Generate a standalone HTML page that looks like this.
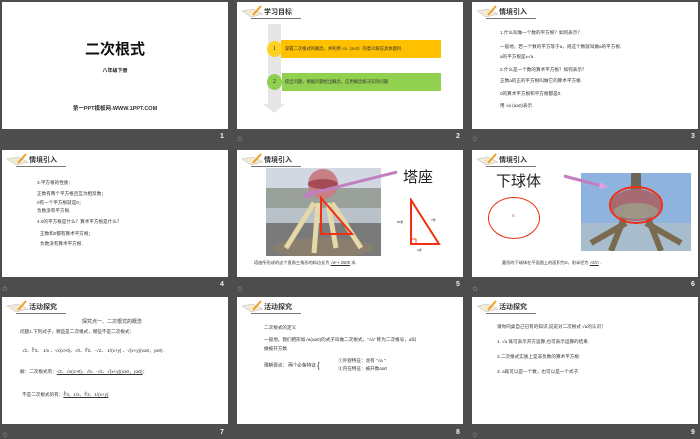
<!DOCTYPE html>
<html><head><meta charset="utf-8"><style>
*{margin:0;padding:0;box-sizing:border-box}
body{width:700px;height:437px;background:#4d4d4d;position:relative;overflow:hidden;font-family:"Liberation Sans","Noto Sans CJK SC",sans-serif;color:#222}
.s{position:absolute;width:226px;height:127px;background:#fff;overflow:hidden}
.a{position:absolute;white-space:nowrap}
.t{font-size:4.6px;color:#333}
.num{position:absolute;color:#eee;font-size:7px;font-weight:bold}
.star{position:absolute;color:#aaa;font-size:6px}
.hd{position:absolute;left:4px;top:3px;width:62px;height:14px}
.hd .lbl{position:absolute;left:23px;top:2px;font-size:7px;font-weight:bold;color:#333}
.hd .ul{position:absolute;left:10px;top:13px;width:50px;height:1px;background:#777}
</style></head><body>

<!-- header template via svg icon -->
<!-- Slide 1 -->
<div class="s" style="left:2px;top:2px">
<div class="a" style="left:0;width:226px;text-align:center;top:36px;font-size:15px;font-weight:bold;color:#111">二次根式</div>
<div class="a" style="left:0;width:226px;text-align:center;top:65px;font-size:5px;font-weight:bold">八年级下册</div>
<div class="a" style="left:0;width:226px;text-align:center;top:102px;font-size:5.5px;font-weight:bold;color:#333">第一PPT模板网-WWW.1PPT.COM</div>
</div>
<div class="num" style="left:220px;top:133px">1</div>

<!-- Slide 2 -->
<div class="s" style="left:237px;top:2px">
<div class="hd"><svg width="24" height="13" style="position:absolute;left:0;top:0"><path d="M1 6 L10 12 L22 9 L12 4Z" fill="#f3ead6" stroke="#bbb" stroke-width=".5"/><path d="M12 10 L20 1" stroke="#f0a020" stroke-width="2"/></svg><div class="lbl">学习目标</div><div class="ul"></div></div>
<div class="a" style="left:31px;top:22px;width:13px;height:82px;background:#e6e6e6"></div>
<div class="a" style="left:26px;top:102px;width:0;height:0;border-left:11px solid transparent;border-right:11px solid transparent;border-top:9px solid #e6e6e6"></div>
<div class="a" style="left:44px;top:38px;width:160px;height:18px;background:#ffc000"></div>
<div class="a" style="left:30px;top:39px;width:15px;height:16px;border-radius:50%;background:#ffd21f;font-size:6px;text-align:center;line-height:16px;font-family:'Liberation Serif',serif">1</div>
<div class="a t" style="left:48px;top:44px;font-size:4.3px">掌握二次根式的概念，并利用 √a（a≥0）的意义解答具体题目.</div>
<div class="a" style="left:45px;top:71px;width:159px;height:18px;background:#92d050"></div>
<div class="a" style="left:30px;top:72px;width:15px;height:16px;border-radius:50%;background:#8fd050;font-size:6px;text-align:center;line-height:16px;font-family:'Liberation Serif',serif">2</div>
<div class="a t" style="left:48px;top:77px;font-size:4.3px">提出问题，根据问题给出概念，应用概念解决实际问题.</div>
</div>
<div class="num" style="left:456px;top:133px">2</div>
<div class="star" style="left:237px;top:134px">☆</div>

<!-- Slide 3 -->
<div class="s" style="left:472px;top:2px">
<div class="hd"><svg width="24" height="13" style="position:absolute;left:0;top:0"><path d="M1 6 L10 12 L22 9 L12 4Z" fill="#f3ead6" stroke="#bbb" stroke-width=".5"/><path d="M12 10 L20 1" stroke="#f0a020" stroke-width="2"/></svg><div class="lbl">情境引入</div><div class="ul"></div></div>
<div class="a t" style="left:28px;top:28px">1.什么叫做一个数的平方根？如何表示？</div>
<div class="a t" style="left:28px;top:42px">一般地，若一个数的平方等于a，则这个数就叫做a的平方根.</div>
<div class="a t" style="left:28px;top:52px">a的平方根是±√a .</div>
<div class="a t" style="left:28px;top:65px">2.什么是一个数的算术平方根？如何表示？</div>
<div class="a t" style="left:28px;top:76px">正数a的正的平方根叫做它的算术平方根.</div>
<div class="a t" style="left:28px;top:89px">0的算术平方根和平方根都是0.</div>
<div class="a t" style="left:28px;top:101px">用 √a (a≥0)表示.</div>
</div>
<div class="num" style="left:691px;top:133px">3</div>
<div class="star" style="left:472px;top:134px">☆</div>

<!-- Slide 4 -->
<div class="s" style="left:2px;top:150px">
<div class="hd"><svg width="24" height="13" style="position:absolute;left:0;top:0"><path d="M1 6 L10 12 L22 9 L12 4Z" fill="#f3ead6" stroke="#bbb" stroke-width=".5"/><path d="M12 10 L20 1" stroke="#f0a020" stroke-width="2"/></svg><div class="lbl">情境引入</div><div class="ul"></div></div>
<div class="a t" style="left:35px;top:30px">3.平方根的性质：</div>
<div class="a t" style="left:35px;top:41px">正数有两个平方根且互为相反数；</div>
<div class="a t" style="left:35px;top:50px">0有一个平方根就是0；</div>
<div class="a t" style="left:35px;top:58px">负数没有平方根.</div>
<div class="a t" style="left:35px;top:69px">4.0的平方根是什么？算术平方根是什么？</div>
<div class="a t" style="left:38px;top:81px">正数和0都有算术平方根；</div>
<div class="a t" style="left:38px;top:91px">负数没有算术平方根.</div>
</div>
<div class="num" style="left:220px;top:281px">4</div>
<div class="star" style="left:2px;top:284px">☆</div>

<!-- Slide 5 -->
<div class="s" style="left:237px;top:150px">
<div class="hd"><svg width="24" height="13" style="position:absolute;left:0;top:0"><path d="M1 6 L10 12 L22 9 L12 4Z" fill="#f3ead6" stroke="#bbb" stroke-width=".5"/><path d="M12 10 L20 1" stroke="#f0a020" stroke-width="2"/></svg><div class="lbl">情境引入</div><div class="ul"></div></div>
<svg class="a" style="left:29px;top:18px" width="115" height="88">
<rect width="115" height="88" fill="#b9c1c9"/>
<rect y="0" width="115" height="20" fill="#d2d8e2"/>
<rect y="20" width="115" height="20" fill="#9aa09a"/>
<rect y="55" width="115" height="33" fill="#7a7a7a"/>
<ellipse cx="57" cy="80" rx="50" ry="10" fill="#8a7f6e"/>
<path d="M48 35 L20 80 M66 35 L95 80 M52 35 L48 85 M62 35 L70 80" stroke="#e6d8a8" stroke-width="5"/>
<circle cx="57" cy="16" r="15" fill="#c97f86"/>
<ellipse cx="57" cy="16" rx="15" ry="5" fill="#a54b55"/>
<path d="M55 30 L55 66 L86 66Z" fill="none" stroke="#f03010" stroke-width="2"/>
</svg>
<svg class="a" style="left:60px;top:16px" width="120" height="40"><path d="M8 30 L15 25 L12 31Z M12 28 L100 6" stroke="#c080c0" stroke-width="3" fill="#f0c0f0"/></svg>
<div class="a" style="left:166px;top:16px;font-size:15px;color:#222;font-family:'Noto Sans CJK SC',sans-serif">塔座</div>
<svg class="a" style="left:170px;top:48px" width="40" height="52"><path d="M4 2 L4 46 L32 46Z" fill="none" stroke="#f03010" stroke-width="2"/><rect x="4" y="41" width="5" height="5" fill="none" stroke="#f03010" stroke-width=".8"/></svg>
<div class="a" style="left:160px;top:70px;font-size:3px">50米</div>
<div class="a" style="left:194px;top:68px;font-size:3px">?米</div>
<div class="a" style="left:180px;top:98px;font-size:3px">a米</div>
<div class="a t" style="left:17px;top:110px;font-size:4.2px">塔座所形成的这个直角三角形的斜边长为 <u>√a²＋2500</u> 米.</div>
</div>
<div class="num" style="left:456px;top:281px">5</div>
<div class="star" style="left:237px;top:284px">☆</div>

<!-- Slide 6 -->
<div class="s" style="left:472px;top:150px">
<div class="hd"><svg width="24" height="13" style="position:absolute;left:0;top:0"><path d="M1 6 L10 12 L22 9 L12 4Z" fill="#f3ead6" stroke="#bbb" stroke-width=".5"/><path d="M12 10 L20 1" stroke="#f0a020" stroke-width="2"/></svg><div class="lbl">情境引入</div><div class="ul"></div></div>
<div class="a" style="left:24px;top:20px;font-size:15px;color:#222;font-family:'Noto Sans CJK SC',sans-serif">下球体</div>
<div class="a" style="left:16px;top:47px;width:52px;height:42px;border:1.5px solid #f03010;border-radius:50%"></div>
<div class="a" style="left:40px;top:63px;font-size:4px;color:#c03030">S</div>
<svg class="a" style="left:109px;top:23px" width="110" height="78">
<rect width="110" height="78" fill="#8fb3df"/>
<rect y="50" width="110" height="28" fill="#a7bccc"/>
<path d="M30 78 L45 40 M80 78 L65 40 M10 70 L45 50 M100 70 L65 50" stroke="#7a6a50" stroke-width="6"/>
<rect x="50" y="0" width="10" height="25" fill="#6c6658"/>
<ellipse cx="55" cy="32" rx="25" ry="16" fill="#a66a72"/>
<ellipse cx="55" cy="38" rx="22" ry="8" fill="#9d9585"/>
<ellipse cx="55" cy="32" rx="26" ry="18" fill="none" stroke="#f03010" stroke-width="2"/>
</svg>
<svg class="a" style="left:90px;top:22px" width="50" height="20"><path d="M2 4 L40 14" stroke="#c080c0" stroke-width="3"/><path d="M38 10 L46 15 L37 17Z" fill="#e0a0e0"/></svg>
<div class="a t" style="left:30px;top:110px;font-size:4.2px">圆形的下球体在平面图上的面积为S，则半径为 <u>√S/π</u> .</div>
</div>
<div class="num" style="left:691px;top:281px">6</div>
<div class="star" style="left:472px;top:284px">☆</div>

<!-- Slide 7 -->
<div class="s" style="left:2px;top:297px">
<div class="hd"><svg width="24" height="13" style="position:absolute;left:0;top:0"><path d="M1 6 L10 12 L22 9 L12 4Z" fill="#f3ead6" stroke="#bbb" stroke-width=".5"/><path d="M12 10 L20 1" stroke="#f0a020" stroke-width="2"/></svg><div class="lbl">活动探究</div><div class="ul"></div></div>
<div class="a t" style="left:80px;top:21px;font-size:5px">探究点一、二次根式的概念</div>
<div class="a t" style="left:18px;top:32px">问题1.下列式子，哪些是二次根式，哪些不是二次根式：</div>
<div class="a t" style="left:20px;top:51px">√2、∛3、 1/x 、√x(x&gt;0)、√0、∜2、-√2、 1/(x+y) 、√(x+y)(x≥0，y≥0).</div>
<div class="a t" style="left:18px;top:72px">解：二次根式有：<u>√2、√x(x&gt;0)、√0、-√2、√(x+y)(x≥0，y≥0)</u>；</div>
<div class="a t" style="left:20px;top:95px">不是二次根式的有：<u>∛3、1/x、∜2、1/(x+y)</u>.</div>
</div>
<div class="num" style="left:220px;top:429px">7</div>
<div class="star" style="left:2px;top:430px">☆</div>

<!-- Slide 8 -->
<div class="s" style="left:237px;top:297px">
<div class="hd"><svg width="24" height="13" style="position:absolute;left:0;top:0"><path d="M1 6 L10 12 L22 9 L12 4Z" fill="#f3ead6" stroke="#bbb" stroke-width=".5"/><path d="M12 10 L20 1" stroke="#f0a020" stroke-width="2"/></svg><div class="lbl">活动探究</div><div class="ul"></div></div>
<div class="a t" style="left:27px;top:28px">二次根式的定义</div>
<div class="a t" style="left:27px;top:40px">一般地，我们把形如√a(a≥0)的式子叫做二次根式，"√a" 称为二次根号，a叫</div>
<div class="a t" style="left:27px;top:49px">做被开方数.</div>
<div class="a t" style="left:27px;top:64px">理解要点：  两个必备特征 <span style="font-size:8px;vertical-align:middle">{</span></div>
<div class="a t" style="left:101px;top:61px">①外貌特征：含有 "√a "</div>
<div class="a t" style="left:101px;top:69px">②内在特征：被开数a≥0</div>
</div>
<div class="num" style="left:456px;top:429px">8</div>

<!-- Slide 9 -->
<div class="s" style="left:472px;top:297px">
<div class="hd"><svg width="24" height="13" style="position:absolute;left:0;top:0"><path d="M1 6 L10 12 L22 9 L12 4Z" fill="#f3ead6" stroke="#bbb" stroke-width=".5"/><path d="M12 10 L20 1" stroke="#f0a020" stroke-width="2"/></svg><div class="lbl">活动探究</div><div class="ul"></div></div>
<div class="a t" style="left:25px;top:27px">请你同桌自己已有的知识,说说对二次根式 √a的认识！</div>
<div class="a t" style="left:25px;top:42px">1. √a 既可表示开方运算,也可表示运算的结果.</div>
<div class="a t" style="left:25px;top:57px">2.二次根式实质上是非负数的算术平方根.</div>
<div class="a t" style="left:25px;top:72px">3. a既可以是一个数，也可以是一个式子.</div>
</div>
<div class="num" style="left:691px;top:429px">9</div>
<div class="star" style="left:472px;top:430px">☆</div>

</body></html>
